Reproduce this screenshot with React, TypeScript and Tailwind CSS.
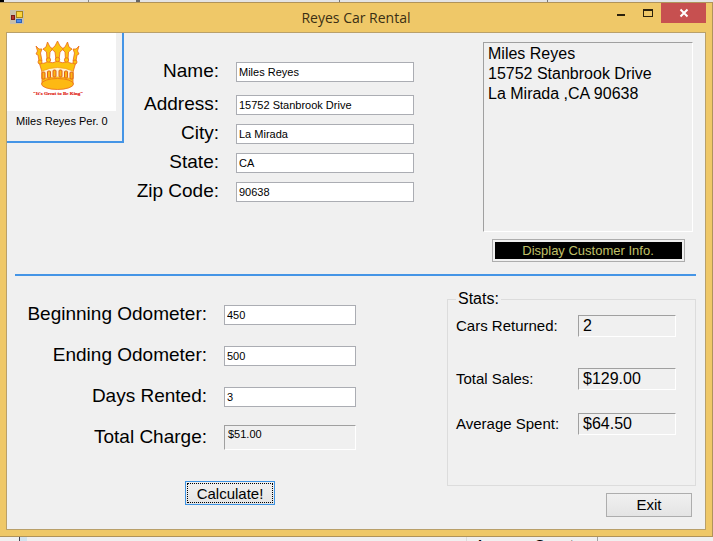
import { useState } from "react";
import type { ReactNode } from "react";

const inset = "border border-t-[#a0a0a0] border-l-[#a0a0a0] border-r-white border-b-white";

function Crown() {
  return (
    <svg viewBox="0 0 56 58" className="h-[58px] w-14" role="img" aria-label="Crown logo">
      <g fill="#fcc30f" stroke="#ea6a1c" strokeWidth="0.8">
        <path d="M9 22 L12 32 L12 44 L43 44 L43 32 L46 22 Q41 25 37 21 Q32 25 27.500 20 Q23 25 18 21 Q14 25 9 22 Z" />
        <path d="M6 6 L9 9 L12 9 L10.500 13 L12 21 L9 21 L8 15 L6 14 L7.500 11 Z" />
        <path d="M49 6 L46 9 L43 9 L44.500 13 L43 21 L46 21 L47 15 L49 14 L47.500 11 Z" />
        <path d="M17.500 2 L20 7 L23 9 L20 12 L19.500 20 L17 20 L16.500 12 L13 9 L16 7 Z" />
        <path d="M37.500 2 L35 7 L32 9 L35 12 L35.500 20 L38 20 L38.500 12 L42 9 L39 7 Z" />
        <path d="M27.500 1 L30 6 L33.500 9 L30 12 L29 20 L26 20 L25 12 L21.500 9 L25 6 Z" />
        <circle cx="10" cy="22" r="2" />
        <circle cx="18.500" cy="20" r="2.200" />
        <circle cx="27.500" cy="19.500" r="2.200" />
        <circle cx="36.500" cy="20" r="2.200" />
        <circle cx="45" cy="22" r="2" />
      </g>
      <path d="M12 31 Q27.500 24 43 31 L43 39 Q27.500 35 12 39 Z" fill="#fff3cf" stroke="#f5a21a" strokeWidth="0.8" />
      <g fill="#fbb515" stroke="#e0601c" strokeWidth="1">
        <rect x="12" y="32" width="3" height="7" rx="1" />
        <rect x="17.500" y="31" width="3" height="7" rx="1" />
        <rect x="23" y="30" width="3" height="7" rx="1" />
        <rect x="29" y="30" width="3" height="7" rx="1" />
        <rect x="34.500" y="31" width="3" height="7" rx="1" />
        <rect x="40" y="32" width="3" height="7" rx="1" />
      </g>
      <ellipse cx="27.500" cy="44" rx="16" ry="5.500" fill="#fdb913" stroke="#ea6a1c" strokeWidth="0.8" />
      <text x="28" y="55" textAnchor="middle" fontSize="5" fontWeight="bold" fill="#e22a1c" stroke="#e22a1c" strokeWidth="0.2" fontFamily="Liberation Serif, serif">
        "It's Great to Be King"
      </text>
    </svg>
  );
}

function AppIcon() {
  return (
    <svg viewBox="0 0 14 14" className="h-3.5 w-3.5" aria-hidden="true">
      <rect width="14" height="14" fill="#c9bfa8" />
      <rect x="1.5" y="5.5" width="3" height="4" fill="#b5322c" stroke="#7b1c18" />
      <rect x="6.5" y="1.5" width="6" height="6" fill="#fbd43c" stroke="#a98414" />
      <rect x="6.500" y="9.500" width="5" height="3" fill="#4d8bea" stroke="#2c62b8" />
    </svg>
  );
}

function Row({ id, label, wide, children }: { id: string; label: string; wide?: boolean; children: ReactNode }) {
  return (
    <div className="flex items-center gap-4">
      <label htmlFor={id} className={`${wide ? "w-[192px]" : "w-[95px]"} mr-px shrink-0 pb-0.5 text-right text-[19px] leading-4 whitespace-nowrap`}>
        {label}
      </label>
      {children}
    </div>
  );
}

function TextBox({ id, initial, size }: { id: string; initial: string; size: string }) {
  const [value, setValue] = useState(initial);
  return (
    <input
      id={id}
      type="text"
      value={value}
      onChange={(e) => setValue(e.target.value)}
      className={`${size} h-5 min-w-0 border border-[#abadb3] bg-white px-0.5 text-[11px] leading-4 outline-none`}
    />
  );
}

function Stat({ id, label, value }: { id: string; label: string; value: string }) {
  return (
    <div className="flex items-center justify-between">
      <label htmlFor={id} className="text-[15px] leading-5 whitespace-nowrap">{label}</label>
      <output id={id} className={`h-[22px] w-[98px] px-1 text-[16px] leading-5 ${inset}`}>{value}</output>
    </div>
  );
}

export default function App() {
  return (
    <div className="flex min-h-screen flex-col bg-[#e4e4e4] font-['Liberation_Sans',Arial,sans-serif] text-black">
      <div className="flex h-0.5 bg-[#e4e4e4]">
        <div className="w-1 bg-black" />
        <div className="ml-[84px] w-px bg-[#888888]" />
        <div className="ml-[47px] w-1 bg-[#666666]" />
        <div className="ml-[199px] w-px bg-[#777777]" />
        <div className="ml-[207px] w-px bg-[#777777]" />
      </div>

      <main className="flex flex-1 flex-col border-y border-r border-[#b0935a] bg-[#efc868] px-1.5 pb-1.5">
        <header className="flex h-[29px] items-start">
          <div className="w-[99px] pt-[7px] pl-1">
            <AppIcon />
          </div>
          <h1 className="flex-1 text-center font-['Open_Sans',sans-serif] text-[14px] leading-[29px] text-[#3a2f14]">Reyes Car Rental</h1>
          <div className="flex w-[99px] shrink-0 justify-end text-[#2b210c]">
            <button aria-label="Minimize" className="flex h-5 w-[27px] items-center justify-center">
              <svg viewBox="0 0 12 12" className="h-3 w-3" aria-hidden="true"><rect x="2" y="7" width="8" height="2" fill="currentColor" /></svg>
            </button>
            <button aria-label="Maximize" className="flex h-5 w-[27px] items-center justify-center">
              <svg viewBox="0 0 12 12" className="h-3 w-3" aria-hidden="true"><path d="M1 2h10v8H1z M2 4v5h8V4z" fillRule="evenodd" fill="currentColor" /></svg>
            </button>
            <button aria-label="Close" className="flex h-5 w-[45px] items-center justify-center bg-[#c75050] text-white">
              <svg viewBox="0 0 10 10" className="h-2.5 w-2.5" aria-hidden="true"><path d="M1.5 1.5l7 7M8.5 1.5l-7 7" stroke="currentColor" strokeWidth="2" /></svg>
            </button>
          </div>
        </header>

        <div className="flex flex-1 flex-col border border-[#b9a06a] bg-[#f0f0f0]">
          <section className="flex h-[241px] items-start">
            <div className="h-[110px] w-[117px] shrink-0 border-r-2 border-b-2 border-[#4595e6]">
              <div className="mr-1.5 flex h-[78px] bg-white pt-[7px] pl-[23px]">
                <Crown />
              </div>
              <p className="pt-0.5 pl-[9px] text-[11px] leading-4 whitespace-nowrap">Miles Reyes Per. 0</p>
            </div>

            <form className="mr-[69px] flex flex-1 flex-col gap-[9px] pt-[29px]">
              <div className="pb-1">
                <Row id="name" label="Name:"><TextBox id="name" initial="Miles Reyes" size="flex-1" /></Row>
              </div>
              <Row id="address" label="Address:"><TextBox id="address" initial="15752 Stanbrook Drive" size="flex-1" /></Row>
              <Row id="city" label="City:"><TextBox id="city" initial="La Mirada" size="flex-1" /></Row>
              <Row id="state" label="State:"><TextBox id="state" initial="CA" size="flex-1" /></Row>
              <Row id="zip" label="Zip Code:"><TextBox id="zip" initial="90638" size="flex-1" /></Row>
            </form>

            <div className="mr-3 flex w-[210px] shrink-0 flex-col items-center gap-[7px] pt-[9px]">
              <ul className={`h-[190px] w-full px-1 pt-px text-[16px] leading-5 ${inset}`}>
                <li>Miles Reyes</li>
                <li>15752 Stanbrook Drive</li>
                <li>La Mirada ,CA 90638</li>
              </ul>
              <button className="h-[23px] w-[193px] border border-[#adadad] bg-[#f0f0f0] p-0.5">
                <span className="block bg-black text-[13px] leading-[17px] text-[#c0c069]">Display Customer Info.</span>
              </button>
            </div>
          </section>

          <hr className="mr-[9px] ml-2 h-0.5 border-0 bg-[#4595e6]" />

          <section className="flex flex-1 items-start justify-between pr-[9px] pl-2">
            <form className="flex flex-col items-start pt-[29px]">
              <div className="flex flex-col gap-[21px]">
                <Row wide id="begin" label="Beginning Odometer:"><TextBox id="begin" initial="450" size="w-[132px]" /></Row>
                <Row wide id="end" label="Ending Odometer:"><TextBox id="end" initial="500" size="w-[132px]" /></Row>
                <Row wide id="days" label="Days Rented:"><TextBox id="days" initial="3" size="w-[132px]" /></Row>
              </div>
              <div className="pt-[18px]">
                <Row wide id="total" label="Total Charge:">
                  <output id="total" className={`h-[25px] w-[132px] px-[3px] text-[11px] leading-4 ${inset}`}>$51.00</output>
                </Row>
              </div>
              <button type="button" className="mt-[31px] ml-[170px] h-6 w-[90px] border border-[#3c93e4] bg-linear-to-b from-[#f0f0f0] to-[#e4e4e4] p-px text-[15px] leading-4">
                <span className="block border border-dotted border-black pt-0.5">Calculate!</span>
              </button>
            </form>

            <div className="flex w-[249px] flex-col items-end pt-[14px]">
              <fieldset className="h-[196px] w-full border border-[#dcdcdc] pr-[19px] pl-2">
                <legend className="px-0.5 text-[16px] leading-[18px]">Stats:</legend>
                <div className="flex flex-col gap-[23px] pt-[7px]">
                  <div className="pb-2">
                    <Stat id="cars" label="Cars Returned:" value="2" />
                  </div>
                  <Stat id="sales" label="Total Sales:" value="$129.00" />
                  <Stat id="average" label="Average Spent:" value="$64.50" />
                </div>
              </fieldset>
              <button className="mt-[7px] mr-1 h-6 w-[86px] border border-[#adadad] bg-linear-to-b from-[#f0f0f0] to-[#e4e4e4] text-[15px] leading-5">Exit</button>
            </div>
          </section>
        </div>
      </main>

      <footer className="flex h-1 overflow-hidden bg-[#f0f0f0] text-[15px] leading-4">
        <div className="w-5 shrink-0 border-r border-[#404050]" />
        <div className="w-[7px] shrink-0 bg-[#d3e4f0]" />
        <div className="w-[440px] shrink-0 border-r border-[#dcdcdc]" />
        <div className="w-[131px] shrink-0 border-r border-[#a0a0a0] pl-2">Average Spent:</div>
      </footer>
    </div>
  );
}
